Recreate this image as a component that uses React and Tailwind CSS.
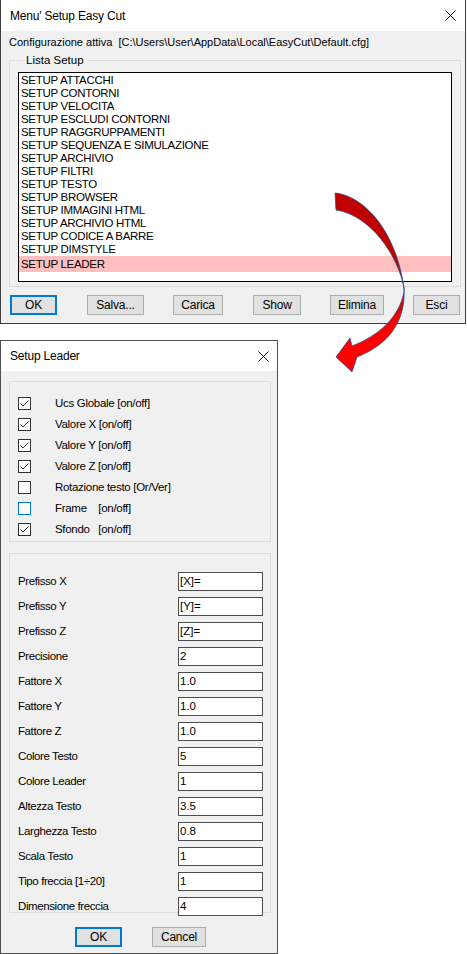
import React from 'react';

const setupItems = [
  'SETUP ATTACCHI',
  'SETUP CONTORNI',
  'SETUP VELOCITA',
  'SETUP ESCLUDI CONTORNI',
  'SETUP RAGGRUPPAMENTI',
  'SETUP SEQUENZA E SIMULAZIONE',
  'SETUP ARCHIVIO',
  'SETUP FILTRI',
  'SETUP TESTO',
  'SETUP BROWSER',
  'SETUP IMMAGINI HTML',
  'SETUP ARCHIVIO HTML',
  'SETUP CODICE A BARRE',
  'SETUP DIMSTYLE',
];

const toggles = [
  { label: 'Ucs Globale [on/off]', checked: true },
  { label: 'Valore X [on/off]', checked: true },
  { label: 'Valore Y [on/off]', checked: true },
  { label: 'Valore Z [on/off]', checked: true },
  { label: 'Rotazione testo [Or/Ver]', checked: false },
  { label: 'Frame    [on/off]', checked: false, focus: true },
  { label: 'Sfondo   [on/off]', checked: true },
];

const fields = [
  ['Prefisso X', '[X]='],
  ['Prefisso Y', '[Y]='],
  ['Prefisso Z', '[Z]='],
  ['Precisione', '2'],
  ['Fattore X', '1.0'],
  ['Fattore Y', '1.0'],
  ['Fattore Z', '1.0'],
  ['Colore Testo', '5'],
  ['Colore Leader', '1'],
  ['Altezza Testo', '3.5'],
  ['Larghezza Testo', '0.8'],
  ['Scala Testo', '1'],
  ['Tipo freccia [1÷20]', '1'],
  ['Dimensione freccia', '4'],
];

function CloseIcon() {
  return (
    <svg width="11" height="11" viewBox="0 0 11 11" className="block">
      <path d="M0.5 0.5 L10.5 10.5 M10.5 0.5 L0.5 10.5" stroke="#000" strokeWidth="1" fill="none" />
    </svg>
  );
}

function Button({ children, width, className = '', primary = false }) {
  return (
    <div
      className={`h-[20px] flex items-center justify-center bg-[#e1e1e1] text-[12px] tracking-[-0.2px] text-black ${
        primary ? 'border-2 border-[#0078d7]' : 'border border-[#adadad]'
      } ${width} ${className}`}>
      {children}
    </div>
  );
}

function CheckBox({ checked, focus }) {
  return (
    <div
      className={`w-[13px] h-[13px] border bg-white flex items-center justify-center ${
        focus ? 'border-[#0078d7]' : 'border-[#333333]'
      }`}>
      {checked && (
        <svg width="11" height="11" viewBox="0 0 11 11">
          <path d="M1.5 5.5 L4 8 L9.5 2.5" stroke="#333" strokeWidth="1" fill="none" />
        </svg>
      )}
    </div>
  );
}

function Arrow() {
  return (
    <svg
      className="absolute left-0 top-0 pointer-events-none"
      width="467"
      height="954"
      viewBox="0 0 467 954">
      <defs>
        <linearGradient id="lowerRed" x1="0" y1="288" x2="0" y2="330" gradientUnits="userSpaceOnUse">
          <stop offset="0" stopColor="#c00000" />
          <stop offset="1" stopColor="#ff0000" />
        </linearGradient>
      </defs>
      {/* lower half with the head */}
      <path
        d="M404 288 C406 322 388 345 357 357 L352 372 L336 357 L350 338 L352 346 C378 336 399 318 404 292 Z"
        fill="url(#lowerRed)"
        stroke="#2f528f"
        strokeWidth="0.8"
      />
      {/* upper half, seen from the back */}
      <path
        d="M335 193 C360 195 395 225 404 288 C398 255 370 215 336 210 Z"
        fill="#c00000"
        stroke="#2f528f"
        strokeWidth="0.8"
      />
    </svg>
  );
}

export default function App() {
  return (
    <div className="relative w-[467px] h-[954px] bg-white overflow-hidden font-['Liberation_Sans',Arial,sans-serif] text-black">
      {/* Menu' Setup Easy Cut */}
      <div className="w-[466px] h-[324px] flex flex-col border-x border-b border-[#404040]">
        <div className="h-[31px] flex items-center justify-between pl-[9px] pr-[9px] bg-white">
          <span className="text-[12px] tracking-[-0.2px]">Menu' Setup Easy Cut</span>
          <CloseIcon />
        </div>
        <div className="flex-1 bg-[#f0f0f0] pl-[8px] pr-[4px]">
          <div className="mt-[5px] h-[13px] leading-[13px] text-[11px] whitespace-pre">
            {'Configurazione attiva  [C:\\Users\\User\\AppData\\Local\\EasyCut\\Default.cfg]'}
          </div>
          <fieldset className="mt-[5px] w-[452px] border border-[#dcdcdc] px-[8px] pb-[4px]">
            <legend className="ml-[5px] px-[3px] text-[11.5px] leading-[12px]">Lista Setup</legend>
            <div className="mt-[6px] h-[210px] border border-black bg-white pt-[1px]">
              {setupItems.map((item) => (
                <div key={item} className="h-[13px] leading-[13px] pl-[2px] text-[11.5px] tracking-[-0.3px]">
                  {item}
                </div>
              ))}
              <div className="h-[16px] leading-[16px] pl-[2px] text-[11.5px] tracking-[-0.3px] bg-[#ffbfbf]">
                SETUP LEADER
              </div>
            </div>
          </fieldset>
          <div className="mt-[8px] flex">
            <Button primary width="w-[47px]" className="ml-[1px]">OK</Button>
            <Button width="w-[57px]" className="ml-[30px]">Salva...</Button>
            <Button width="w-[50px]" className="ml-[29px]">Carica</Button>
            <Button width="w-[48px]" className="ml-[30px]">Show</Button>
            <Button width="w-[54px]" className="ml-[29px]">Elimina</Button>
            <Button width="w-[47px]" className="ml-[29px]">Esci</Button>
          </div>
        </div>
      </div>

      {/* Setup Leader */}
      <div className="mt-[16px] w-[278px] h-[614px] flex flex-col border border-[#505050]">
        <div className="h-[30px] flex items-center justify-between pl-[9px] pr-[8px] bg-white">
          <span className="text-[12px] tracking-[-0.2px]">Setup Leader</span>
          <CloseIcon />
        </div>
        <div className="flex-1 bg-[#f0f0f0] pl-[8px]">
          <div className="mt-[10px] w-[262px] h-[161px] border border-[#dcdcdc] pl-[8px] pt-[11px]">
            {toggles.map((t) => (
              <div key={t.label} className="h-[21px] flex items-center">
                <CheckBox checked={t.checked} focus={t.focus} />
                <span className="ml-[24px] text-[11.5px] tracking-[-0.3px] whitespace-pre">{t.label}</span>
              </div>
            ))}
          </div>
          <div className="mt-[11px] w-[262px] h-[360px] border border-[#dcdcdc] pl-[8px] pt-[15px]">
            {fields.map(([label, value]) => (
              <div key={label} className="h-[25px] flex items-center">
                <span className="w-[160px] text-[11.5px] tracking-[-0.4px]">{label}</span>
                <div className="w-[85px] h-[19px] border border-[#4d4d4d] bg-white pl-[1px] text-[11.5px] leading-[17px]">
                  {value}
                </div>
              </div>
            ))}
          </div>
          <div className="mt-[14px] flex">
            <Button primary width="w-[47px]" className="ml-[66px]">OK</Button>
            <Button width="w-[54px]" className="ml-[30px]">Cancel</Button>
          </div>
        </div>
      </div>

      <Arrow />
    </div>
  );
}
